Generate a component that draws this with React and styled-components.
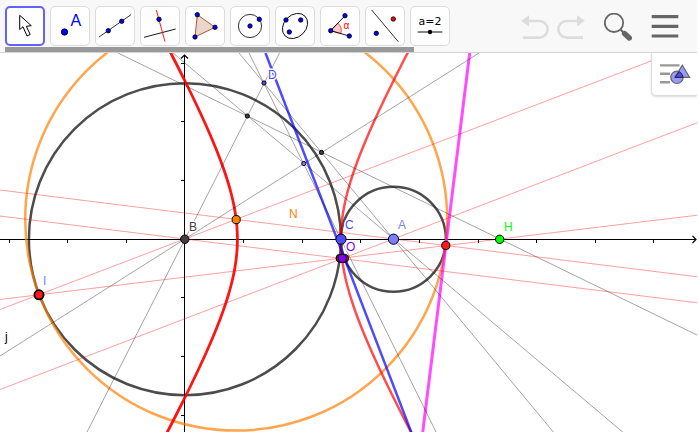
import React, { useState } from "react";
import styled, { createGlobalStyle } from "styled-components";

const GlobalStyle = createGlobalStyle`
  * {
    box-sizing: border-box;
  }
  body {
    margin: 0;
    background: #fff;
    font-family: "Liberation Sans", Arial, sans-serif;
  }
`;

const Page = styled.div`
  display: flex;
  flex-direction: column;
  height: 100vh;
  padding: 0 2px 2px 0;
`;

const Toolbar = styled.header`
  display: flex;
  align-items: flex-start;
  justify-content: space-between;
  padding: 6px 18px 0 5px;
  background: #f8f8f8;
  border-bottom: 1px solid #d3d3d3;
`;

const ToolArea = styled.div`
  display: flex;
  flex-direction: column;
  gap: 1px;
`;

const ToolList = styled.div`
  display: flex;
  gap: 5px;
`;

const ToolButton = styled.button`
  display: flex;
  align-items: center;
  justify-content: center;
  width: 40px;
  height: 40px;
  padding: 0;
  border-radius: 5px;
  border: ${(props) =>
    props.$active ? "2px solid #6161ff" : "1px solid #dcdcdc"};
  background: #fff;
  cursor: pointer;
`;

const ToolIcon = styled.svg`
  flex: none;
  width: 34px;
  height: 34px;
  fill: none;
  stroke: #000;
`;

const ScrollThumb = styled.div`
  width: 92%;
  height: 5px;
  background: #999;
`;

const Actions = styled.div`
  display: flex;
  gap: 19px;
  padding-top: 7px;
`;

const History = styled.div`
  display: flex;
  gap: 8px;
`;

const ActionButton = styled.button`
  display: block;
  padding: 0;
  border: 0;
  background: none;
  color: ${(props) => (props.disabled ? "#dcdcdc" : "#666")};

  svg {
    display: block;
    width: 28px;
    height: 28px;
    fill: none;
    stroke: currentColor;
  }
`;

const Plot = styled.main`
  position: relative;
  flex: 1;
  min-height: 0;
  overflow: hidden;
`;

const Drawing = styled.svg`
  display: block;
  width: 100%;
  height: 100%;
`;

const Label = styled.text`
  font-size: 12px;
  fill: ${(props) => props.$color};
  stroke: #fff;
  stroke-width: 3px;
  stroke-linejoin: round;
  paint-order: stroke;
`;

const StyleBarButton = styled.button`
  position: absolute;
  top: 0;
  right: 0;
  width: 46px;
  height: 43px;
  padding: 0 0 0 7px;
  border: 1px solid #dcdcdc;
  border-width: 0 0 1px 1px;
  border-radius: 0 0 0 5px;
  background: #fff;
  box-shadow: 0 1px 2px rgba(0, 0, 0, 0.15);

  svg {
    display: block;
    width: 32px;
    height: 22px;
  }
`;

const IconDot = ({ x, y, r = 2.2, color = "#0000ff" }) => (
  <circle cx={x} cy={y} r={r} fill={color} stroke="#000" strokeWidth="0.8" />
);

const tools = [
  {
    name: "Move",
    icon: (
      <path
        d="M14.7 9.3V23.5L18 20.8L22 30L25.2 28.4L21.3 20.3L26.3 19.7Z"
        fill="#fff"
        strokeWidth="1"
      />
    ),
  },
  {
    name: "Point",
    icon: (
      <>
        <IconDot x={14.5} y={26} r={3.2} />
        <text x="20.5" y="20" fontSize="16" fill="#0000ff" stroke="none">
          A
        </text>
      </>
    ),
  },
  {
    name: "Line",
    icon: (
      <>
        <path d="M4 31L36 8.7" strokeWidth="0.8" />
        <IconDot x={13.3} y={24.7} />
        <IconDot x={26.7} y={15.3} />
      </>
    ),
  },
  {
    name: "Perpendicular Line",
    icon: (
      <>
        <path d="M4 31.3L35.7 23" strokeWidth="0.9" />
        <path d="M16.3 4L25 35.7" stroke="#ff0000" strokeWidth="0.9" />
        <IconDot x={19} y={13.3} />
      </>
    ),
  },
  {
    name: "Polygon",
    icon: (
      <>
        <path
          d="M12.3 8.7L30 21.3L10 31Z"
          fill="#ebd6cc"
          stroke="#993300"
          strokeWidth="0.8"
        />
        <IconDot x={12.3} y={8.7} />
        <IconDot x={30} y={21.3} />
        <IconDot x={10} y={31} />
      </>
    ),
  },
  {
    name: "Circle with Center",
    icon: (
      <>
        <circle cx="20" cy="20" r="11.6" strokeWidth="0.8" />
        <IconDot x={20} y={20} />
        <IconDot x={29.3} y={13.3} />
      </>
    ),
  },
  {
    name: "Ellipse",
    icon: (
      <>
        <ellipse
          cx="20"
          cy="20"
          rx="14"
          ry="11"
          transform="rotate(-45 20 20)"
          strokeWidth="0.9"
        />
        <IconDot x={11} y={14} />
        <IconDot x={25.7} y={14} />
        <IconDot x={14.3} y={26} />
      </>
    ),
  },
  {
    name: "Angle",
    icon: (
      <>
        <path
          d="M10.7 24.7L17.9 17.1A10.5 10.5 0 0 1 20.8 27.6Z"
          fill="#ffcccc"
          stroke="#ff0000"
          strokeWidth="0.7"
        />
        <path d="M25 9.7L10.7 24.7L29.3 30" strokeWidth="0.9" />
        <IconDot x={10.7} y={24.7} />
        <IconDot x={25} y={9.7} />
        <IconDot x={29.3} y={30} />
        <text x="23.5" y="23" fontSize="10" fill="#ff0000" stroke="none">
          α
        </text>
      </>
    ),
  },
  {
    name: "Reflect about Line",
    icon: (
      <>
        <path d="M6.7 4L33.3 35.7" strokeWidth="0.8" />
        <IconDot x={28.3} y={13} color="#ff0000" />
        <IconDot x={11.3} y={27.3} />
      </>
    ),
  },
  {
    name: "Slider",
    icon: (
      <>
        <text
          x="20"
          y="19"
          fontSize="11"
          fontFamily="DejaVu Sans, sans-serif"
          textAnchor="middle"
          fill="#000"
          stroke="none"
        >
          a=2
        </text>
        <path d="M7.7 26H32.3" stroke="#333" strokeWidth="1.2" />
        <circle cx="20" cy="26" r="2.2" fill="#000" stroke="none" />
      </>
    ),
  },
];

// view window of the graphics area
const VIEW = { left: 0, right: 697, top: 53, bottom: 432 };
const AXIS_Y = 239.5;
const AXIS_X = 184.5;
const UNIT = 58.62;

const B = { x: 184.9, y: 239.2, r: 156 };
const A = { x: 393.4, y: 239.2, r: 52.5 };

const grayLines = [
  [0, 356, 479, 53],
  [86, 434, 279.5, 53],
  [118, 53, 699, 336],
  [239, 53, 555, 434],
  [173, 53, 625, 434],
  [249, 53, 437, 434],
];

const redLines = [
  [0, 190, 699, 277],
  [0, 216, 699, 303],
  [0, 309.5, 672, 53],
  [0, 299.5, 699, 215],
  [0, 389.5, 699, 122],
];

// branch of the hyperbola with foci A and B, side is -1 (left) or 1 (right)
const hyperbola = (side) => {
  const center = (A.x + B.x) / 2;
  const a = (B.r - A.r) / 2;
  const c = (A.x - B.x) / 2;
  const b2 = c * c - a * a;
  const pts = [];
  for (let y = VIEW.top - 3; y <= VIEW.bottom + 3; y += 3) {
    const dy = y - A.y;
    const x = center + side * a * Math.sqrt(1 + (dy * dy) / b2);
    pts.push(`${x.toFixed(2)},${y}`);
  }
  return pts.join(" ");
};

const points = [
  { x: 264, y: 83, r: 2.1, color: "#4d4dff" },
  { x: 247.3, y: 116, r: 2.1, color: "#404040" },
  { x: 321.5, y: 152.4, r: 2.1, color: "#404040" },
  { x: 303.8, y: 163.5, r: 2.1, color: "#7d7dff" },
  { x: 184.8, y: 239.2, r: 4.2, color: "#404040" },
  { x: 341, y: 239.2, r: 5.1, color: "#4d4dff" },
  { x: 393.5, y: 239.2, r: 5.1, color: "#7d7dff" },
  { x: 236.2, y: 219.6, r: 4.1, color: "#ff7f00" },
  { x: 39, y: 294.8, r: 4.6, color: "#ff1a1a", width: 1.8 },
  { x: 445.8, y: 245.5, r: 4.1, color: "#ff1a1a" },
  { x: 499.7, y: 239.3, r: 4.2, color: "#00ff00" },
  { x: 340, y: 258.3, r: 4, color: "#991111" },
  { x: 344.6, y: 258.3, r: 4, color: "#cc1111" },
  { x: 342.3, y: 258.4, r: 4.1, color: "#7d00ff" },
];

const labels = [
  { text: "D", x: 268, y: 79, color: "#4d4dff" },
  { text: "B", x: 189, y: 231, color: "#404040" },
  { text: "C", x: 345, y: 229, color: "#4d4dff" },
  { text: "A", x: 398, y: 229, color: "#7d7dff" },
  { text: "N", x: 289, y: 218, color: "#ff7f00" },
  { text: "O", x: 346, y: 251, color: "#7d00ff" },
  { text: "H", x: 504, y: 231, color: "#00ff00" },
  { text: "I", x: 43, y: 285, color: "#7d7dff" },
  { text: "j", x: 5, y: 341, color: "#000" },
];

const Axes = () => {
  const xTicks = [-3, -2, -1, 1, 2, 3, 4, 5, 6, 7, 8];
  const yTicks = [-3, -2, -1, 1, 2, 3];
  return (
    <g stroke="#000" fill="none">
      <path d={`M0 ${AXIS_Y}H696M${AXIS_X} 55V434`} />
      <path d="M692.5 236L696 239.5L692.5 243M181 58.5L184.5 55L188 58.5" strokeWidth="1.2" />
      {xTicks.map((n) => (
        <path key={n} d={`M${Math.floor(B.x + n * UNIT) + 0.5} 240v3`} />
      ))}
      {yTicks.map((n) => (
        <path key={n} d={`M181 ${Math.floor(B.y + n * UNIT) + 0.5}h3`} />
      ))}
    </g>
  );
};

const Lines = ({ items, ...rest }) => (
  <g strokeWidth="1" {...rest}>
    {items.map(([x1, y1, x2, y2]) => (
      <line key={`${x1}-${y1}`} x1={x1} y1={y1} x2={x2} y2={y2} />
    ))}
  </g>
);

const Geometry = () => (
  <Drawing
    viewBox={`${VIEW.left} ${VIEW.top} ${VIEW.right - VIEW.left} ${VIEW.bottom - VIEW.top}`}
    preserveAspectRatio="xMinYMin slice"
    role="img"
    aria-label="Tangent circles construction"
  >
    <Axes />
    <g fill="none" strokeWidth="2.5" strokeOpacity="0.7">
      <circle cx={B.x} cy={B.y} r={B.r} stroke="#000" />
      <circle cx={A.x} cy={A.y} r={A.r} stroke="#000" />
      <circle cx="236.2" cy="219.6" r="211" stroke="#ff7f00" />
      <polyline points={hyperbola(1)} stroke="#ff0000" />
      <path d="M265.5 53L412 434" stroke="#0000ff" />
      <path d="M469.7 53L422.5 434" stroke="#ff00ff" strokeWidth="3" />
    </g>
    <polyline
      points={hyperbola(-1)}
      fill="none"
      stroke="#ff0000"
      strokeOpacity="0.92"
      strokeWidth="2.8"
    />
    <Lines items={grayLines} stroke="#000" strokeOpacity="0.36" />
    <Lines items={redLines} stroke="#ff0000" strokeOpacity="0.38" />
    {points.map((p) => (
      <circle
        key={`${p.x}-${p.y}`}
        cx={p.x}
        cy={p.y}
        r={p.r}
        fill={p.color}
        stroke="#000"
        strokeWidth={p.width || 1}
      />
    ))}
    {labels.map((label) => (
      <Label key={label.text} x={label.x} y={label.y} $color={label.color}>
        {label.text}
      </Label>
    ))}
  </Drawing>
);

const App = () => {
  const [activeTool, setActiveTool] = useState("Move");

  return (
    <Page>
      <GlobalStyle />
      <Toolbar>
        <ToolArea>
          <ToolList>
            {tools.map((tool) => (
              <ToolButton
                key={tool.name}
                type="button"
                aria-label={tool.name}
                $active={tool.name === activeTool}
                onClick={() => setActiveTool(tool.name)}
              >
                <ToolIcon viewBox="3 3 34 34">{tool.icon}</ToolIcon>
              </ToolButton>
            ))}
          </ToolList>
          <ScrollThumb />
        </ToolArea>
        <Actions>
          <History>
            <ActionButton type="button" aria-label="Undo" disabled>
              <svg viewBox="0 0 28 28">
                <path d="M0 7.8L8 2.3V13.4Z" fill="currentColor" stroke="none" />
                <path d="M7 8H18.3a8.3 8.3 0 0 1 0 16.6H2" strokeWidth="2.6" />
              </svg>
            </ActionButton>
            <ActionButton type="button" aria-label="Redo" disabled>
              <svg viewBox="0 0 28 28">
                <path d="M28 7.8L20 2.3V13.4Z" fill="currentColor" stroke="none" />
                <path d="M21 8H9.7a8.3 8.3 0 0 0 0 16.6H26" strokeWidth="2.6" />
              </svg>
            </ActionButton>
          </History>
          <ActionButton type="button" aria-label="Search">
            <svg viewBox="0 0 28 28">
              <circle cx="10" cy="9.8" r="9.2" strokeWidth="1.8" />
              <path d="M16.5 16.5L20 20" strokeWidth="2" />
              <path d="M20.5 20.5L25.3 25" strokeWidth="5.4" strokeLinecap="round" />
            </svg>
          </ActionButton>
          <ActionButton type="button" aria-label="Menu">
            <svg viewBox="0 0 28 28">
              <path d="M0.7 3.7H27.3M0.7 13.4H27.3M0.7 23H27.3" strokeWidth="3.2" />
            </svg>
          </ActionButton>
        </Actions>
      </Toolbar>
      <Plot>
        <Geometry />
        <StyleBarButton type="button" aria-label="Style bar">
          <svg viewBox="0 0 32 22" fill="none">
            <path d="M1 2.4H20.5M1 10.8H11M1 19.2H11" stroke="#999" strokeWidth="2.4" />
            <circle cx="18" cy="14.3" r="7.6" fill="#fff" />
            <path d="M23.3 -0.5L32 15H15Z" fill="#fff" />
            <circle cx="18" cy="14.3" r="6.2" fill="#9999ff" stroke="#666" strokeWidth="1.2" />
            <path
              d="M23.3 2.2L30.6 14.3H15.9Z"
              fill="#9999ff"
              stroke="#666"
              strokeWidth="1.2"
            />
            <path
              d="M16 14.3L20.3 8.6Q23.6 10.6 24.1 14.3Z"
              fill="#4d4dff"
              stroke="#222"
              strokeWidth="1"
            />
          </svg>
        </StyleBarButton>
      </Plot>
    </Page>
  );
};

export default App;
